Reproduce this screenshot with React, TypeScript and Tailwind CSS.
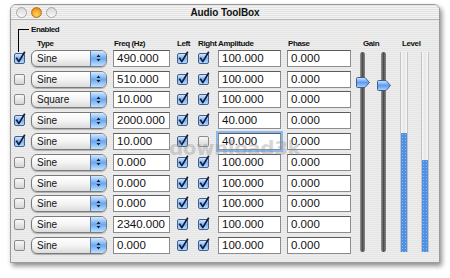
import React from 'react';

type Row = {
  on: boolean;
  type: string;
  freq: string;
  left: boolean;
  right: boolean;
  amp: string;
  phase: string;
  focus?: boolean;
};

const rows: Row[] = [
  { on: true, type: 'Sine', freq: '490.000', left: true, right: true, amp: '100.000', phase: '0.000' },
  { on: false, type: 'Sine', freq: '510.000', left: true, right: true, amp: '100.000', phase: '0.000' },
  { on: false, type: 'Square', freq: '10.000', left: true, right: true, amp: '100.000', phase: '0.000' },
  { on: true, type: 'Sine', freq: '2000.000', left: true, right: true, amp: '40.000', phase: '0.000' },
  { on: true, type: 'Sine', freq: '10.000', left: true, right: false, amp: '40.000', phase: '0.000', focus: true },
  { on: false, type: 'Sine', freq: '0.000', left: true, right: true, amp: '100.000', phase: '0.000' },
  { on: false, type: 'Sine', freq: '0.000', left: true, right: true, amp: '100.000', phase: '0.000' },
  { on: false, type: 'Sine', freq: '0.000', left: true, right: true, amp: '100.000', phase: '0.000' },
  { on: false, type: 'Sine', freq: '2340.000', left: true, right: true, amp: '100.000', phase: '0.000' },
  { on: false, type: 'Sine', freq: '0.000', left: true, right: true, amp: '100.000', phase: '0.000' },
];

const label = "font-['Liberation_Sans',sans-serif] font-bold text-[8px] tracking-[-0.4px] leading-[9px] text-[#111] whitespace-nowrap";
const field = "font-['Liberation_Sans',sans-serif] text-[11.5px] leading-[15px] text-[#111]";

function Check({ on }: { on: boolean }) {
  return (
    <svg width="11" height="11" viewBox="0 0 11 11" className="overflow-visible shrink-0">
      <rect x="0.5" y="0.5" width="10" height="10" rx="1.5" fill={on ? 'url(#cbOn)' : 'url(#cbOff)'} stroke={on ? '#41608c' : '#8a8a8a'} />
      {on && <path d="M2.3 4.6 L4.8 8.6 L10.8 -1.2" fill="none" stroke="#14183a" strokeWidth="1.7" strokeLinejoin="round" />}
    </svg>
  );
}

function Popup({ text }: { text: string }) {
  return (
    <div className="w-[76px] h-[17px] rounded-[6px] border border-[#7a7a7a] bg-gradient-to-b from-white via-[#f4f4f4] to-[#dcdcdc] flex items-center overflow-hidden shadow-[0_1px_1px_rgba(0,0,0,0.25)]">
      <span className="flex-1 pl-[5px] font-['Liberation_Sans',sans-serif] text-[10px] text-[#111]">{text}</span>
      <div className="w-[16px] h-full border-l border-[#5f7fa6] bg-gradient-to-b from-[#d4e9ff] via-[#69a8ef] to-[#bfe0ff] flex items-center justify-center">
        <svg width="5" height="8" viewBox="0 0 5 8">
          <path d="M2.5 0.5 L4.5 3 L0.5 3 Z M0.5 5 L4.5 5 L2.5 7.5 Z" fill="#1b2233" />
        </svg>
      </div>
    </div>
  );
}

function Field({ value, w, focus }: { value: string; w: string; focus?: boolean }) {
  return (
    <div className={`${w} h-[17px] bg-white border border-[#8c8c8c] border-t-[#5c5c5c] pl-[3px] ${field} ${focus ? 'shadow-[0_0_0_2px_#8bb8f0]' : ''}`}>
      {value}
    </div>
  );
}

function Thumb() {
  return (
    <svg width="14" height="11" viewBox="0 0 14 11">
      <defs>
        <linearGradient id="th" x1="0" y1="0" x2="0" y2="1">
          <stop offset="0" stopColor="#cfe6ff" />
          <stop offset="0.5" stopColor="#5e9ded" />
          <stop offset="1" stopColor="#a9d2ff" />
        </linearGradient>
      </defs>
      <path d="M1.5 0.5 H9 L13.5 5.5 L9 10.5 H1.5 Q0.5 10.5 0.5 9.5 V1.5 Q0.5 0.5 1.5 0.5 Z" fill="url(#th)" stroke="#3d5f93" />
    </svg>
  );
}

function Track({ thumbTop }: { thumbTop: string }) {
  return (
    <div className="relative w-[5px] h-[200px] rounded-full bg-gradient-to-r from-[#9a9a9a] via-[#4d4d4d] to-[#8a8a8a]">
      <div className={`absolute left-[-4px] ${thumbTop}`}>
        <Thumb />
      </div>
    </div>
  );
}

function Meter({ fill }: { fill: string }) {
  return (
    <div className="w-[8px] h-[200px] flex flex-col justify-end border-x border-[#c4c4c4] bg-gradient-to-r from-[#f7f7f7] via-[#e6e6e6] to-[#f7f7f7]">
      <div className={`${fill} w-full bg-[#4f8fe4] bg-[radial-gradient(#8bb9f3_0.6px,transparent_0.7px)] bg-[length:3px_3px]`} />
    </div>
  );
}

export default function App() {
  return (
    <div className="w-[450px] h-[278px] bg-white pl-[10px] pt-[4px]">
      <svg width="0" height="0" className="absolute">
        <defs>
          <linearGradient id="cbOn" x1="0" y1="0" x2="0" y2="1">
            <stop offset="0" stopColor="#d8ebff" />
            <stop offset="0.5" stopColor="#7eb5f0" />
            <stop offset="1" stopColor="#b9dcff" />
          </linearGradient>
          <linearGradient id="cbOff" x1="0" y1="0" x2="0" y2="1">
            <stop offset="0" stopColor="#fafafa" />
            <stop offset="1" stopColor="#d4d4d4" />
          </linearGradient>
        </defs>
      </svg>

      <div className="relative w-[430px] h-[259px] rounded-t-[6px] border border-[#9a9a9a] overflow-hidden shadow-[2px_3px_5px_rgba(0,0,0,0.45)] bg-[#ececec] bg-[repeating-linear-gradient(0deg,#ededed_0px,#ededed_1px,#e6e6e6_1px,#e6e6e6_2px)]">
        {/* title bar */}
        <div className="h-[15px] grid grid-cols-[1fr_auto_1fr] items-center border-b border-[#b5b5b5] bg-[repeating-linear-gradient(0deg,#f4f4f4_0px,#f4f4f4_1px,#e2e2e2_1px,#e2e2e2_2px)]">
          <div className="flex items-center gap-[4px] pl-[5px]">
            <span className="w-[11px] h-[11px] rounded-full border border-[#a8a8a8] bg-gradient-to-b from-[#d8d8d8] to-[#fafafa]" />
            <span className="w-[11px] h-[11px] rounded-full border border-[#b8761a] bg-[radial-gradient(circle_at_50%_70%,#ffd46a,#f0a020_60%,#c87814)]" />
            <span className="w-[11px] h-[11px] rounded-full border border-[#a8a8a8] bg-gradient-to-b from-[#d8d8d8] to-[#fafafa]" />
          </div>
          <div className="font-['Liberation_Sans',sans-serif] font-bold text-[10px] text-[#111] tracking-[-0.1px]">Audio ToolBox</div>
          <div />
        </div>

        {/* enabled bracket row */}
        <div className="relative mt-[5px] h-[10px] flex items-start pl-[7px]">
          <div className="absolute left-[7px] top-[4px] w-[11px] h-[23px] border-l border-t border-black" />
          <span className={`${label} ml-[13px]`}>Enabled</span>
        </div>

        <div className="flex mt-[4px]">
          {/* table */}
          <div className="w-[340px] pl-[3px]">
            <div className="flex h-[9px] items-start">
              <div className="w-[11px]" />
              <div className={`${label} w-[76px] ml-[6px] pl-[6px]`}>Type</div>
              <div className={`${label} w-[57px] ml-[6px] pl-[1px]`}>Freq (Hz)</div>
              <div className={`${label} w-[11px] ml-[7px]`}>Left</div>
              <div className={`${label} w-[11px] ml-[10px]`}>Right</div>
              <div className={`${label} w-[63px] ml-[9px]`}>Amplitude</div>
              <div className={`${label} w-[64px] ml-[6px] pl-[1px]`}>Phase</div>
            </div>
            {rows.map((r, i) => (
              <div key={i} className="flex h-[20.8px] items-center">
                <Check on={r.on} />
                <div className="ml-[6px]"><Popup text={r.type} /></div>
                <div className="ml-[6px]"><Field value={r.freq} w="w-[57px]" /></div>
                <div className="ml-[7px] flex"><Check on={r.left} /></div>
                <div className="ml-[10px] flex"><Check on={r.right} /></div>
                <div className="ml-[9px]"><Field value={r.amp} w="w-[63px]" focus={r.focus} /></div>
                <div className="ml-[6px]"><Field value={r.phase} w="w-[64px]" /></div>
              </div>
            ))}
          </div>

          {/* gain */}
          <div className="w-[42px] flex flex-col">
            <div className={`${label} h-[9px] pl-[12px]`}>Gain</div>
            <div className="flex gap-[16px] mt-[4px] pl-[9px]">
              <Track thumbTop="top-[25px]" />
              <Track thumbTop="top-[28px]" />
            </div>
          </div>

          {/* level */}
          <div className="flex flex-col">
            <div className={`${label} h-[9px] pl-[9px]`}>Level</div>
            <div className="flex gap-[13px] mt-[4px] pl-[7px]">
              <Meter fill="h-[119px]" />
              <Meter fill="h-[92px]" />
            </div>
          </div>
        </div>

        {/* watermark */}
        <div className="absolute left-[158px] top-[128px] font-['DejaVu_Sans',sans-serif] font-bold text-[20px] tracking-[-0.5px] text-[rgba(140,140,140,0.35)] pointer-events-none">
          download3k
        </div>
      </div>
    </div>
  );
}
